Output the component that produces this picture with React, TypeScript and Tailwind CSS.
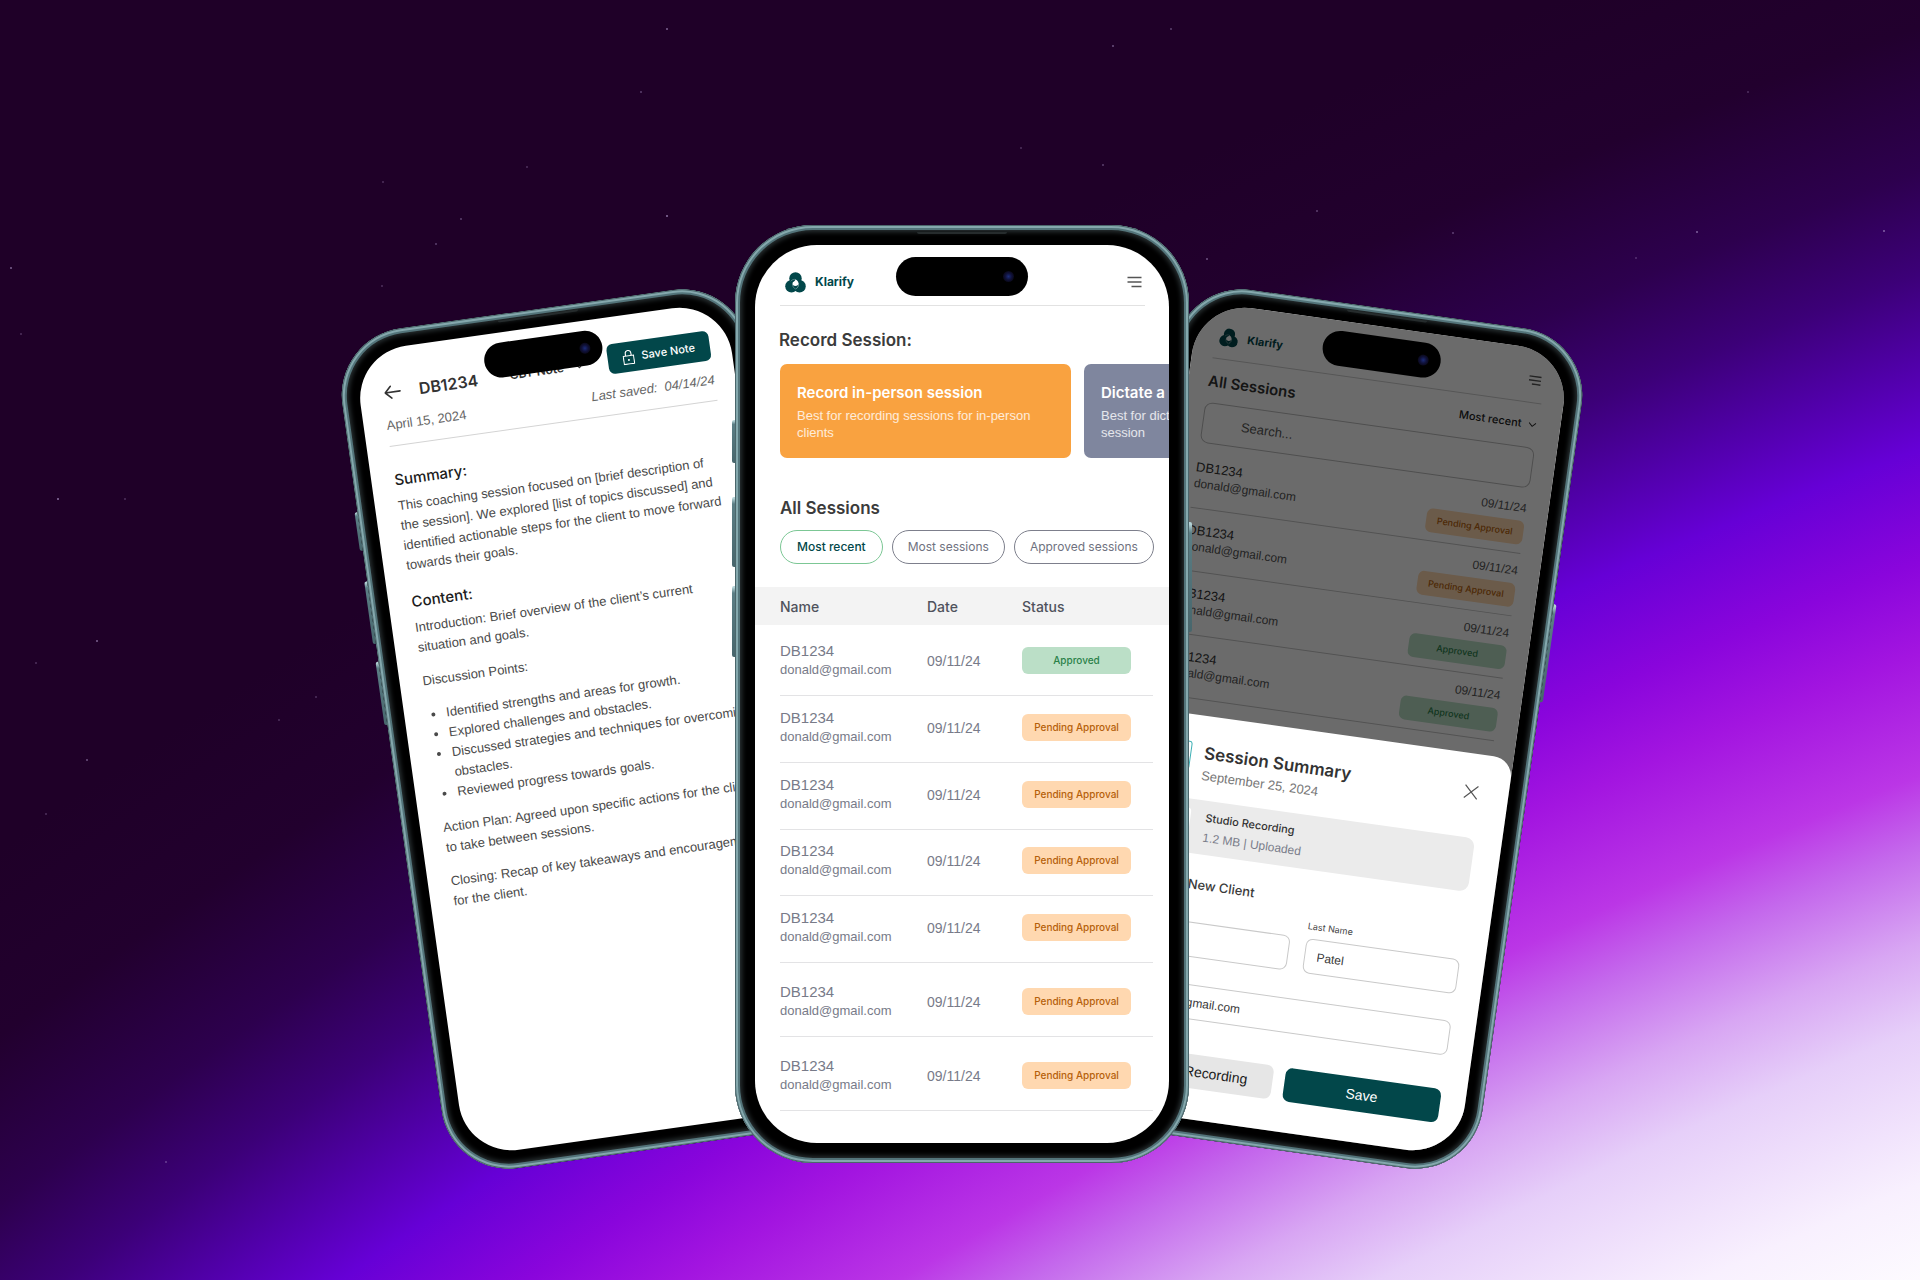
import React from 'react';
import { clsx } from 'clsx';

type Size = 'lg' | 'sm';

const INTER = "font-['Inter',sans-serif]";

const STARS: [number, number, number][] = [
  [11, 268, 0.6], [21, 334, 0.3], [58, 499, 0.7], [97, 641, 0.6], [87, 760, 0.5], [46, 814, 0.3],
  [667, 29, 0.6], [641, 92, 0.4], [667, 216, 0.7], [461, 219, 0.4], [383, 182, 0.3], [1207, 259, 0.5],
  [1453, 233, 0.4], [1317, 211, 0.4], [1697, 232, 0.6], [1171, 29, 0.4], [1113, 46, 0.5], [1103, 165, 0.4],
  [1021, 148, 0.3], [1884, 231, 0.6], [1748, 92, 0.3], [316, 697, 0.3], [279, 720, 0.3], [166, 1162, 0.4],
  [436, 244, 0.4], [125, 499, 0.3], [527, 167, 0.3], [36, 663, 0.3], [382, 286, 0.3], [1636, 258, 0.3],
];

function Starfield() {
  return (
    <svg
      className="pointer-events-none absolute inset-0 size-full"
      viewBox="0 0 1920 1280"
      preserveAspectRatio="xMidYMid slice"
      aria-hidden="true"
    >
      {STARS.map(([x, y, o]) => (
        <circle key={`${x}-${y}`} cx={x} cy={y} r={1} fill="#b9a3d6" opacity={o} />
      ))}
    </svg>
  );
}

function LogoMark({ className }: { className?: string }) {
  return (
    <svg className={className} viewBox="0 0 42 42" aria-hidden="true">
      <g fill="#02474a">
        <circle cx="21" cy="13" r="12.5" />
        <circle cx="13" cy="28.500" r="12.5" />
        <circle cx="29" cy="28.500" r="12.5" />
      </g>
      <path d="M21 15c3 1 6 4 6 8 0 3-3 5-6 5-4 0-6-2-6-5s3-4 4-5c1-1 2-2 2-3z" fill="#fff" />
      <g fill="none" stroke="#fff" strokeWidth="1" strokeLinecap="round">
        <path d="M21 15c-3-1-7 0-9 3" opacity=".6" />
        <path d="M27 23c1 4-1 8-4 10" opacity=".8" />
        <path d="M15 25c0 4 2 7 6 9" opacity=".6" />
      </g>
    </svg>
  );
}

function Brand({ size }: { size: Size }) {
  return (
    <a
      href="#home"
      className={clsx(INTER, 'flex items-center gap-[9px] font-bold text-[#02474a]', size === 'lg' ? 'text-[12px]' : 'text-[11px]')}
    >
      <LogoMark className={size === 'lg' ? 'size-[21px]' : 'size-[19px]'} />
      Klarify
    </a>
  );
}

function MenuButton({ size }: { size: Size }) {
  return (
    <button type="button" aria-label="Open menu" className="text-[#555]">
      <svg className={size === 'lg' ? 'w-[15px]' : 'w-[13px]'} viewBox="0 0 15 12" fill="none" stroke="currentColor" strokeWidth="1.6">
        <path d="M0.5 1.5h14M0.5 6h14M4.5 10.5h10" />
      </svg>
    </button>
  );
}

function Phone({
  size,
  className,
  overlay,
  children,
}: {
  size: Size;
  className?: string;
  overlay?: React.ReactNode;
  children: React.ReactNode;
}) {
  const lg = size === 'lg';
  const key = 'absolute w-[5px] rounded-[2px] bg-linear-to-b from-[#b5d3d7] from-2% via-[#5b7e85] via-10% to-[#47666c]';
  return (
    <div className={clsx('relative shrink-0', className)}>
      <span className={clsx(key, '-left-[3px]', lg ? 'top-[195px] h-[43px]' : 'top-[176px] h-[39px]')} />
      <span className={clsx(key, '-left-[3px]', lg ? 'top-[272px] h-[70px]' : 'top-[246px] h-[63px]')} />
      <span className={clsx(key, '-left-[3px]', lg ? 'top-[361px] h-[71px]' : 'top-[327px] h-[64px]')} />
      <span className={clsx(key, '-right-[3px]', lg ? 'top-[297px] h-[110px]' : 'top-[269px] h-[99px]')} />
      <div
        className={clsx(
          'relative bg-black shadow-[inset_0_0_0_1px_#4b666b,inset_0_0_0_3px_#84a8ad,inset_0_0_0_5px_#53747a,inset_0_0_5px_7px_#2b3335]',
          lg ? 'rounded-[78px] p-5' : 'rounded-[68px] p-[18px]',
        )}
      >
        <span className={clsx('absolute left-1/2 h-[2px] -translate-x-1/2 rounded-b bg-[#262c2d]', lg ? 'top-[7px] w-[90px]' : 'top-[6px] w-[81px]')} />
        <div
          className={clsx(
            'relative overflow-hidden bg-white',
            lg ? 'min-h-[898px] w-[414px] rounded-[62px]' : 'min-h-[812px] w-[375px] rounded-[53px]',
          )}
        >
          {children}
          {overlay}
          <div
            className={clsx(
              'absolute left-1/2 flex -translate-x-1/2 items-center justify-end rounded-full bg-black',
              lg ? 'top-[12px] h-[39px] w-[132px] pr-[14px]' : 'top-[10px] h-[35px] w-[119px] pr-[12px]',
            )}
          >
            <span className="size-[11px] rounded-full bg-[radial-gradient(circle,#1c2c78_0%,#10123c_40%,#08060f_80%)]" />
          </div>
        </div>
      </div>
    </div>
  );
}

function StatusBadge({ status, size }: { status: 'Approved' | 'Pending Approval'; size: Size }) {
  return (
    <span
      className={clsx(
        INTER,
        'flex items-center justify-center font-medium',
        size === 'lg' ? 'h-[27px] w-[109px] rounded-[6px] text-[10px]' : 'h-[24px] w-[98px] rounded-[6px] text-[9px]',
        status === 'Approved' ? 'bg-[#bbdfc7] text-[#2a8149]' : 'bg-[#ffd8b0] text-[#b5600a]',
      )}
    >
      {status}
    </span>
  );
}

function NoteScreen() {
  return (
    <div className="pr-[21px] pl-[23px] pt-[27px] text-[13px] leading-5 whitespace-nowrap text-[#4a4a4a]">
      <div className={clsx(INTER, 'flex pl-[2px]')}>
        <div className="flex items-center pt-1">
          <button type="button" aria-label="Back" className="text-[#333]">
            <svg className="w-[17px]" viewBox="0 0 17 14" fill="none" stroke="currentColor" strokeWidth="1.6" strokeLinecap="round" strokeLinejoin="round">
              <path d="M16 7H1M7 1L1 7l6 6" />
            </svg>
          </button>
          <h2 className="ml-[18px] text-[16px] font-semibold text-[#333]">DB1234</h2>
          <button type="button" className="ml-[32px] flex items-center gap-3 text-[12px] font-semibold text-[#333]">
            CBT Note
            <svg className="w-2" viewBox="0 0 8 5" fill="none" stroke="currentColor">
              <path d="M0.500 0.500L4 4l3.500-3.500" />
            </svg>
          </button>
        </div>
        <button type="button" className="ml-auto flex h-[30px] w-[103px] items-center justify-center gap-[7px] rounded-[6px] bg-[#02474a] text-[11px] font-medium text-white">
          <svg className="w-[12px]" viewBox="0 0 12 15" fill="none" stroke="currentColor" strokeWidth="1.1">
            <path d="M0.800 6h10.400v8.200H0.800zM3.200 6V3.600C3.200 1.800 4.400 0.700 6 0.700s2.800 1.100 2.800 2.900V6" />
            <circle cx="6" cy="10.200" r="1" fill="currentColor" stroke="none" />
          </svg>
          Save Note
        </button>
      </div>
      <div className="mt-[10px] flex justify-between border-b border-[#d4d4d4] pb-[10px] text-[#666]">
        <span>April 15, 2024</span>
        <em>Last saved:&nbsp; 04/14/24</em>
      </div>
      <h3 className={clsx(INTER, 'mt-[22px] text-[15px] leading-6 font-medium text-[#1c1c1c]')}>Summary:</h3>
      <p className="mt-1">
        This coaching session focused on [brief description of
        <br />
        the session]. We explored [list of topics discussed] and
        <br />
        identified actionable steps for the client to move forward
        <br />
        towards their goals.
      </p>
      <h3 className={clsx(INTER, 'mt-[15px] text-[15px] leading-6 font-medium text-[#1c1c1c]')}>Content:</h3>
      <p className="mt-1">
        Introduction: Brief overview of the client’s current
        <br />
        situation and goals.
      </p>
      <p className="mt-[14px]">Discussion Points:</p>
      <ul className="mt-[14px] list-disc pl-[19px]">
        <li>Identified strengths and areas for growth.</li>
        <li>Explored challenges and obstacles.</li>
        <li>
          Discussed strategies and techniques for overcoming
          <br />
          obstacles.
        </li>
        <li>Reviewed progress towards goals.</li>
      </ul>
      <p className="mt-[14px]">
        Action Plan: Agreed upon specific actions for the client
        <br />
        to take between sessions.
      </p>
      <p className="mt-[14px]">
        Closing: Recap of key takeaways and encouragement
        <br />
        for the client.
      </p>
    </div>
  );
}

const SESSIONS = [
  { status: 'Approved', height: 'h-[71px]' },
  { status: 'Pending Approval', height: 'h-[67px]' },
  { status: 'Pending Approval', height: 'h-[67px]' },
  { status: 'Pending Approval', height: 'h-[66px]' },
  { status: 'Pending Approval', height: 'h-[67px]' },
  { status: 'Pending Approval', height: 'h-[74px]' },
  { status: 'Pending Approval', height: 'h-[74px]' },
] as const;

function SessionCard({ title, text, className }: { title: string; text: string; className: string }) {
  return (
    <button type="button" className={clsx('w-[291px] shrink-0 rounded-[7px] px-[17px] pt-[19px] pb-[17px] text-left text-white', className)}>
      <span className={clsx(INTER, 'block text-[15px] leading-5 font-semibold')}>{title}</span>
      <span className="mt-1 block text-[13px] leading-[17px] text-white/80">{text}</span>
    </button>
  );
}

function HomeScreen() {
  return (
    <>
      <header className="mr-[24px] ml-[25px] flex h-[61px] items-center justify-between border-b border-[#e2e2e2] pt-[14px] pr-[3px] pl-[5px]">
        <Brand size="lg" />
        <MenuButton size="lg" />
      </header>
      <h1 className={clsx(INTER, 'mt-[22px] ml-6 text-[17px] leading-6 font-semibold text-[#3b3b3b]')}>Record Session:</h1>
      <div className="mt-3 flex gap-[13px] overflow-hidden pl-[25px]">
        <SessionCard title="Record in-person session" text="Best for recording sessions for in-person clients" className="bg-[#f9a240]" />
        <SessionCard title="Dictate a session" text="Best for dictating notes following each session" className="bg-[#7f869e]" />
      </div>
      <h2 className={clsx(INTER, 'mt-[38px] ml-[25px] text-[17px] leading-6 font-semibold text-[#3b3b3b]')}>All Sessions</h2>
      <div className={clsx(INTER, 'mt-[10px] ml-[25px] flex gap-[9px] text-[12px]')}>
        <button type="button" className="h-[34px] rounded-full border border-[#7cc795] px-4 font-medium text-[#02474a]">Most recent</button>
        <button type="button" className="h-[34px] rounded-full border border-[#7d7f8c] px-[15px] text-[#6f7280]">Most sessions</button>
        <button type="button" className="h-[34px] rounded-full border border-[#7d7f8c] px-[15px] text-[#6f7280]">Approved sessions</button>
      </div>
      <table className="mt-[23px] w-full table-fixed border-separate border-spacing-0 text-left text-[#787b89]">
        <colgroup>
          <col className="w-[25px]" />
          <col className="w-[147px]" />
          <col className="w-[95px]" />
          <col />
          <col className="w-[16px]" />
        </colgroup>
        <thead className={clsx(INTER, 'bg-[#f3f3f3] text-[14px] text-[#4f525c]')}>
          <tr className="h-[38px]">
            <td />
            <th className="font-medium">Name</th>
            <th className="font-medium">Date</th>
            <th className="font-medium">Status</th>
            <td />
          </tr>
        </thead>
        <tbody>
          {SESSIONS.map((s, i) => (
            <tr key={i} className={s.height}>
              <td />
              <td className="border-b border-[#e3e3e5] pb-[16px] align-bottom">
                <span className="block text-[15px] leading-5">DB1234</span>
                <span className="block text-[13px] leading-[18px]">donald@gmail.com</span>
              </td>
              <td className="border-b border-[#e3e3e5] pb-[24px] align-bottom text-[14px] leading-5">09/11/24</td>
              <td className="border-b border-[#e3e3e5] pb-[21px] align-bottom">
                <StatusBadge status={s.status} size="lg" />
              </td>
              <td />
            </tr>
          ))}
        </tbody>
      </table>
    </>
  );
}

const RECENT = ['Pending Approval', 'Pending Approval', 'Approved', 'Approved'] as const;

function SessionListScreen() {
  return (
    <>
      <header className="mr-[22px] ml-[21px] flex h-[55px] items-center justify-between border-b border-[#ccc] pt-[10px] pr-[3px] pl-[4px]">
        <Brand size="sm" />
        <MenuButton size="sm" />
      </header>
      <div className="mr-[22px] ml-5">
        <div className={clsx(INTER, 'mt-[13px] flex h-5 items-start justify-between')}>
          <h2 className="text-[15px] leading-5 font-semibold text-[#333]">All Sessions</h2>
          <button type="button" className="flex items-center gap-[7px] pr-[2px] text-[11px] leading-4 font-medium text-[#222]">
            Most recent
            <svg className="w-[8px]" viewBox="0 0 8 5" fill="none" stroke="currentColor">
              <path d="M0.500 0.500L4 4l3.500-3.500" />
            </svg>
          </button>
        </div>
        <input
          type="search"
          aria-label="Search sessions"
          placeholder="Search..."
          className="mt-[11px] block h-[41px] w-full rounded-[8px] border border-[#bbb] bg-transparent pl-[38px] text-[13px] placeholder:text-[#555]"
        />
        <ul className="mt-[3px]">
          {RECENT.map((status, i) => (
            <li key={i} className="flex h-[63px] justify-between border-b border-[#c4c4c4]">
              <div className="pt-[14px] leading-4">
                <p className="text-[13px] text-[#333]">DB1234</p>
                <p className="text-[12px] text-[#555]">donald@gmail.com</p>
              </div>
              <div className="flex flex-col items-end pt-[9px] text-[12px] leading-4 text-[#555]">
                <span className="mb-[5px]">09/11/24</span>
                <StatusBadge status={status} size="sm" />
              </div>
            </li>
          ))}
        </ul>
      </div>
    </>
  );
}

function SummarySheet() {
  const field = "mt-1 block h-[35px] w-full rounded-[7px] border border-[#c9c9c9] bg-white px-3 font-['Liberation_Sans',sans-serif] text-[12px] leading-4 text-[#3a3a3a]";
  return (
    <>
      <div className="absolute inset-0 bg-black/58" />
      <section className="absolute inset-x-0 top-[410px] bottom-0 rounded-t-[20px] bg-white pt-[25px] pr-[25px] pl-[23px]">
        <div className="flex">
          <span className="mt-[2px] h-[29px] w-8 rounded-[3px] border border-[#3fb0b5]" />
          <div className="ml-[13px]">
            <h2 className={clsx(INTER, 'text-[17px] leading-[25px] font-semibold text-[#333]')}>Session Summary</h2>
            <p className="text-[13px] leading-5 text-[#777]">September 25, 2024</p>
          </div>
          <button type="button" aria-label="Close" className="mt-[6px] mr-[5px] ml-auto self-start text-[#555]">
            <svg className="size-[15px]" viewBox="0 0 15 15" fill="none" stroke="currentColor" strokeWidth="1.200">
              <path d="M1 1l13 13M14 1L1 14" />
            </svg>
          </button>
        </div>
        <div className="mt-[14px] mr-[2px] flex h-[54px] items-center gap-[15px] rounded-[9px] bg-[#ebebeb] pl-[7px] leading-5">
          <span className="h-9 w-[33px] rounded-[4px] bg-white" />
          <div>
            <p className={clsx(INTER, 'text-[11px] font-medium text-[#333]')}>Studio Recording</p>
            <p className="text-[12px] text-[#7a7d8a]">1.2 MB | Uploaded</p>
          </div>
        </div>
        <label className={clsx(INTER, 'mt-5 flex items-center gap-[2px] text-[13px] leading-5 font-medium text-[#3a3a3a]')}>
          <input type="radio" defaultChecked className="size-4 accent-[#02474a]" />
          Add New Client
        </label>
        <div className={clsx(INTER, 'mt-2 grid grid-cols-2 gap-4 text-[9px] leading-4 text-[#444]')}>
          <label>
            First Name
            <input type="text" defaultValue="Don" className={field} />
          </label>
          <label>
            Last Name
            <input type="text" defaultValue="Patel" className={field} />
          </label>
        </div>
        <label className={clsx(INTER, 'mt-[7px] block text-[9px] leading-4 text-[#444]')}>
          Email
          <input type="email" defaultValue="donald@gmail.com" className={field} />
        </label>
        <div className="mt-[34px] grid grid-cols-2 gap-3 text-[14px]">
          <button type="button" className="h-[34px] rounded-[7px] bg-[#e6e6e6] text-[#1c1c1c]">Delete Recording</button>
          <button type="button" className="h-[34px] rounded-[7px] bg-[#02474a] text-white">Save</button>
        </div>
      </section>
    </>
  );
}

export default function App() {
  return (
    <main className="relative flex min-h-screen items-start justify-center overflow-hidden bg-[radial-gradient(circle_7600px_at_4359px_7000px,#ffffff_6180px,#f8f0fe_6307px,#e6cff9_6450px,#d8a6f3_6530px,#c468ec_6620px,#bb36e6_6685px,#a315e0_6800px,#8a05dc_6885px,#6600d6_6990px,#5000a8_7072px,#3c0078_7155px,#2d004e_7252px,#22002e_7388px,#1f0028_7540px)] pt-[225px] pb-24 pl-1 font-['Liberation_Sans',sans-serif]">
      <Starfield />
      <Phone size="sm" className="mt-20 -mr-[66px] -rotate-8">
        <NoteScreen />
      </Phone>
      <Phone size="lg" className="z-10">
        <HomeScreen />
      </Phone>
      <Phone size="sm" className="mt-20 -ml-[66px] rotate-8" overlay={<SummarySheet />}>
        <SessionListScreen />
      </Phone>
    </main>
  );
}
